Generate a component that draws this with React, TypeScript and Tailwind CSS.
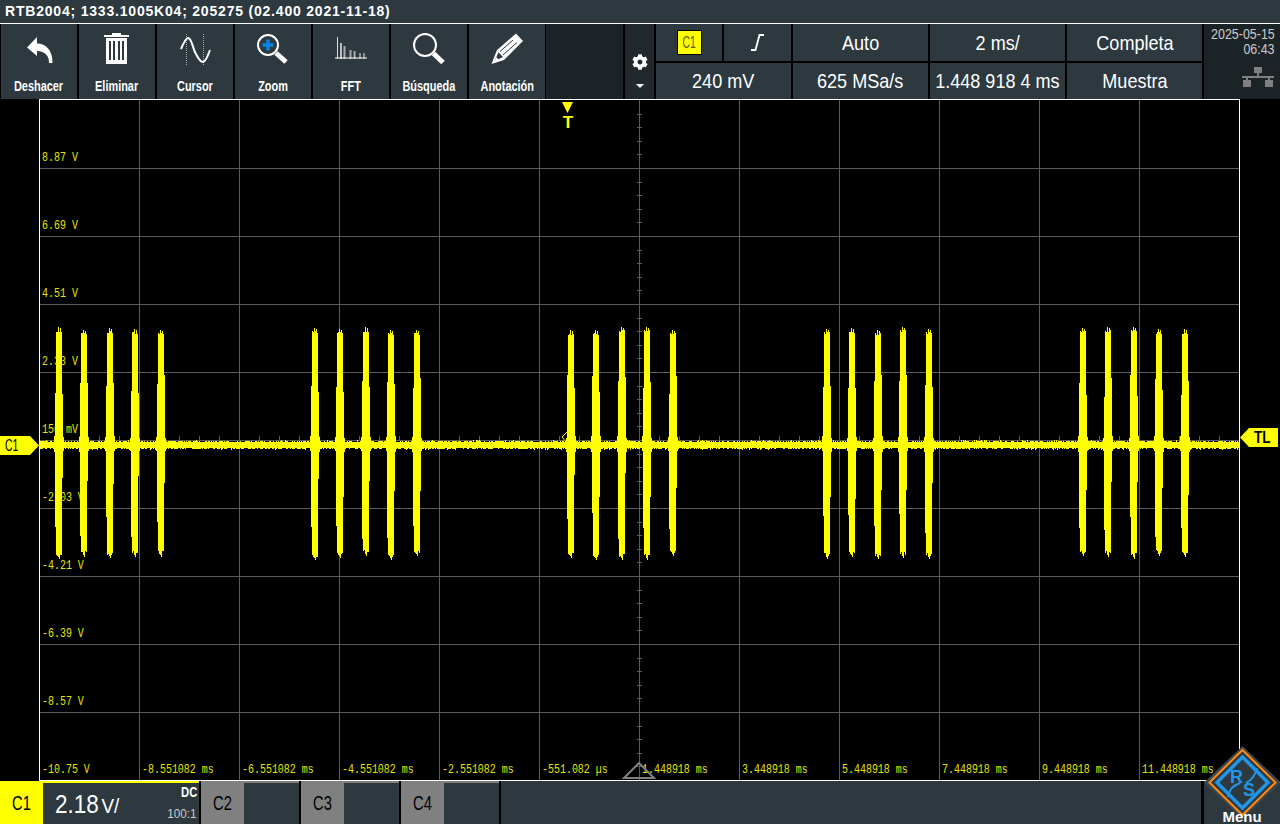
//@ts-nocheck
import { FaCog } from "react-icons/fa";

const sans = "font-['Liberation_Sans',sans-serif]";

// deterministic noise so the trace stays the same on every render
let seed = 1337;
const rnd = () => {
  seed = (seed * 16807) % 2147483647;
  return seed / 2147483647;
};

const burstGroups = [58.5, 314.5, 570.5, 826.5, 1082.5];
const burstOffsets = [0, 25.5, 51, 76.7, 102.2];

function buildTrace() {
  const cols = {};
  const put = (x, a, b) => {
    const c = cols[x];
    if (!c) cols[x] = [a, b];
    else cols[x] = [Math.min(c[0], a), Math.max(c[1], b)];
  };
  for (let x = 40; x < 1239; x++) {
    let a = 441 + Math.floor(rnd() * 2);
    let b = 448 + Math.floor(rnd() * 2);
    if (rnd() > 0.93) a -= 1;
    if (rnd() > 0.9) b += 1;
    put(x, a, b);
  }
  burstGroups.forEach((g) => {
    burstOffsets.forEach((o) => {
      const c = Math.round(g + o);
      const top = 327 + Math.floor(rnd() * 4);
      const bot = 556 + Math.floor(rnd() * 5);
      // core
      for (let x = c - 3; x <= c + 2; x++) {
        put(x, top + 3 + Math.floor(rnd() * 3), bot - 3 - Math.floor(rnd() * 4));
      }
      // tips
      put(c - 1, top, top + 10);
      put(c + 1, top + 1, top + 10);
      put(c, bot - 8, bot);
      put(c - 1, bot - 8, bot - 2);
      // outer steps
      put(c - 4, 375 + Math.floor(rnd() * 25), 540 - Math.floor(rnd() * 30));
      put(c + 3, 375 + Math.floor(rnd() * 25), 500 - Math.floor(rnd() * 30));
      // wider blob at the baseline
      for (let x = c - 5; x <= c + 4; x++) put(x, 436 + Math.floor(rnd() * 3), 451 + Math.floor(rnd() * 2));
    });
  });
  return Object.keys(cols)
    .map((x) => `M${Number(x) + 0.5} ${cols[x][0]}V${cols[x][1]}`)
    .join("");
}
const tracePath = buildTrace();

const gridX = Array.from({ length: 11 }, (_, i) => 139 + i * 100);
const gridY = Array.from({ length: 9 }, (_, i) => 168 + i * 68);
const ticksX = Array.from({ length: 59 }, (_, i) => 59 + i * 20);
const ticksY = Array.from({ length: 49 }, (_, i) => 113.6 + i * 13.6);

const yLabels = ["8.87 V", "6.69 V", "4.51 V", "2.33 V", "150 mV", "-2.03 V", "-4.21 V", "-6.39 V", "-8.57 V", "-10.75 V"];
const xLabels = [
  "-8.551082 ms",
  "-6.551082 ms",
  "-4.551082 ms",
  "-2.551082 ms",
  "-551.082 µs",
  "1.448918 ms",
  "3.448918 ms",
  "5.448918 ms",
  "7.448918 ms",
  "9.448918 ms",
  "11.448918 ms",
];

function UndoIcon() {
  return (
    <svg viewBox="23 33 32 32" className="h-8 w-8">
      <path d="M27 47.5L37 37V43.5C46 43.5 52.5 50 52.5 63H49C49 55.5 45 51.5 37 51V56Z" fill="#fff" />
    </svg>
  );
}

function TrashIcon() {
  return (
    <svg viewBox="102 33 32 32" className="h-8 w-8">
      <rect x="113" y="33" width="9" height="2" fill="#fff" />
      <rect x="105" y="35" width="25" height="2" fill="#fff" />
      <rect x="107" y="38" width="21" height="26" fill="#fff" />
      <rect x="110" y="41" width="2" height="19" fill="#2d383f" />
      <rect x="114" y="41" width="2" height="19" fill="#2d383f" />
      <rect x="119" y="41" width="2" height="19" fill="#2d383f" />
      <rect x="123" y="41" width="2" height="19" fill="#2d383f" />
    </svg>
  );
}

function CursorIcon() {
  return (
    <svg viewBox="179 33 32 32" className="h-8 w-8" fill="none">
      <path d="M186.5 34V65M203.5 34V65" stroke="#aaa" strokeWidth="1" strokeDasharray="1 1" />
      <path d="M181 49C184 42 186 38 188 38C192 38 193 50 196 54C198 58 201 62 203 62C206 62 208 55 210 50" stroke="#fff" strokeWidth="2" />
    </svg>
  );
}

function ZoomIcon() {
  return (
    <svg viewBox="257 33 32 32" className="h-8 w-8" fill="none">
      <circle cx="268" cy="45" r="10" stroke="#fff" strokeWidth="2" />
      <path d="M276 53L286 62" stroke="#fff" strokeWidth="5" />
      <path d="M268 39.5V50.5M262.5 45H273.5" stroke="#0a84e8" strokeWidth="3.5" />
    </svg>
  );
}

function FftIcon() {
  return (
    <svg viewBox="335 33 32 32" className="h-8 w-8" fill="none">
      <path d="M337.5 37V59" stroke="#ddd" strokeWidth="1" />
      <path d="M341 43V59" stroke="#bbb" strokeWidth="2" />
      <path d="M344.5 46V59" stroke="#aaa" strokeWidth="2" />
      <path d="M350.5 50V59M354.5 51V59" stroke="#aaa" strokeWidth="2" />
      <path d="M360 53V59M364 53V59" stroke="#aaa" strokeWidth="1.5" />
      <path d="M335 58H367" stroke="#fff" strokeWidth="1" />
    </svg>
  );
}

function SearchIcon() {
  return (
    <svg viewBox="413 33 32 32" className="h-8 w-8" fill="none">
      <circle cx="425" cy="45" r="11" stroke="#fff" strokeWidth="2" />
      <path d="M433.5 53.5L443 62.5" stroke="#fff" strokeWidth="5" />
    </svg>
  );
}

function PencilIcon() {
  return (
    <svg viewBox="491 33 32 32" className="h-8 w-8">
      <path d="M491.5 64L497 50L516 33.5L523 41L504 60Z" fill="#fff" />
      <path d="M494.5 61L498.5 52.5L503 57Z" fill="#2d383f" />
      <path d="M494.5 61L496.5 57L498.5 60Z" fill="#fff" />
      <path d="M500 51.5L513 40M503 55L517 42.5" stroke="#2d383f" strokeWidth="1" fill="none" />
    </svg>
  );
}

const toolbar = [
  { label: "Deshacer", icon: <UndoIcon /> },
  { label: "Eliminar", icon: <TrashIcon /> },
  { label: "Cursor", icon: <CursorIcon /> },
  { label: "Zoom", icon: <ZoomIcon /> },
  { label: "FFT", icon: <FftIcon /> },
  { label: "Búsqueda", icon: <SearchIcon /> },
  { label: "Anotación", icon: <PencilIcon /> },
];

// the instrument's font is tall and narrow, so the values are squeezed sideways
function Value({ children }) {
  return (
    <div className="flex items-center justify-center overflow-hidden bg-[#2d383f] whitespace-nowrap">
      <span className="inline-block scale-x-[0.86]">{children}</span>
    </div>
  );
}

function ChannelTab({ name }) {
  return (
    <div className="flex w-[98px] flex-none">
      <div className={`flex w-[43px] items-center justify-center bg-[#808080] text-[21px] text-black ${sans}`}>
        <span className="inline-block scale-x-[0.7]">{name}</span>
      </div>
      <div className="flex-1 border-t-2 border-[#808080] bg-[#2d383f]" />
    </div>
  );
}

export default function App() {
  return (
    <div className="flex h-[824px] w-[1280px] flex-col overflow-hidden bg-black">
      {/* title bar */}
      <div className="flex h-[24px] flex-none items-center border-b border-white bg-[#2d383f] pl-[5px] pb-px font-['Liberation_Sans',sans-serif] text-[14px] font-bold tracking-[0.8px] text-white">
        RTB2004; 1333.1005K04; 205275 (02.400 2021-11-18)
      </div>

      {/* toolbar */}
      <div className="flex h-[75px] flex-none bg-black">
        <div className="flex gap-[2px] pl-px">
          {toolbar.map((b) => (
            <div key={b.label} className="flex w-[76px] flex-none flex-col items-center bg-[#2d383f] pt-[9px]">
              {b.icon}
              <div className={`mt-[13px] text-[14px] leading-[16px] font-bold whitespace-nowrap text-white ${sans}`}>
                <span className="inline-block scale-x-[0.78]">{b.label}</span>
              </div>
            </div>
          ))}
        </div>
        <div className="ml-px w-[77px] flex-none bg-[#1c2327]" />
        <div className="ml-[2px] flex w-[29px] flex-none flex-col items-center bg-[#22292e] pt-[30px]">
          <FaCog className="text-white" size={16} />
          <div className="mt-[14px] h-0 w-0 border-x-[4px] border-t-[4px] border-x-transparent border-t-white" />
        </div>
        <div className={`ml-[2px] grid w-[546px] flex-none grid-cols-[66px_67px_135px_135px_135px] grid-rows-[37px_36px] gap-x-[2px] gap-y-[2px] text-[21px] text-white ${sans}`}>
          <div className="flex items-center justify-center bg-[#2d383f]">
            <div className="flex h-[25px] w-[25px] items-center justify-center border border-black bg-[#ffff00] text-[16px] text-[#5a5a00]">
              <span className="inline-block scale-x-[0.65]">C1</span>
            </div>
          </div>
          <div className="flex items-center justify-center bg-[#2d383f]">
            <svg viewBox="0 0 15 17" className="h-[17px] w-[15px]" fill="none">
              <path d="M1 16H5.5L9.5 1H14" stroke="#fff" strokeWidth="1.8" />
            </svg>
          </div>
          <Value>Auto</Value>
          <Value>2 ms/</Value>
          <Value>Completa</Value>
          <div className="col-span-2 flex items-center justify-center bg-[#2d383f]">
            <span className="inline-block scale-x-[0.86]">240 mV</span>
          </div>
          <Value>625 MSa/s</Value>
          <Value>1.448 918 4 ms</Value>
          <Value>Muestra</Value>
        </div>
        <div className={`ml-[2px] flex w-[76px] flex-none flex-col items-end overflow-hidden bg-[#1c2327] pt-[2px] pr-[5px] text-[15px] leading-[15px] whitespace-nowrap text-[#cccccc] ${sans}`}>
          <div className="origin-right scale-x-[0.83]">2025-05-15</div>
          <div className="origin-right scale-x-[0.83]">06:43</div>
          <svg viewBox="0 0 32 20" className="mt-[11px] mr-px h-[20px] w-[32px] flex-none" fill="#808080">
            <rect x="12" y="0" width="8" height="6" />
            <rect x="0" y="9" width="32" height="2" />
            <rect x="15" y="5" width="2" height="5" />
            <rect x="4" y="10" width="2" height="4" />
            <rect x="26" y="10" width="2" height="4" />
            <rect x="1" y="13" width="8" height="7" />
            <rect x="23" y="13" width="8" height="7" />
          </svg>
        </div>
      </div>

      {/* plot */}
      <div className="relative flex h-[682px] flex-none">
        <div className="w-[39px] flex-none" />
        <div className="relative w-[1201px] flex-none border border-white">
          <div className="absolute inset-0 flex flex-col pl-[2px] font-['Liberation_Mono',monospace] text-[12px] leading-[12px] text-[#e4e400]">
            {yLabels.map((l) => (
              <div key={l} className="flex h-[68px] flex-none items-end pb-[4px] whitespace-pre">
                <span className="inline-block origin-left scale-x-[0.83]">{l}</span>
              </div>
            ))}
          </div>
          <div className="absolute right-0 bottom-[4px] left-0 flex pl-[99px] font-['Liberation_Mono',monospace] text-[12px] leading-[12px] text-[#e4e400]">
            {xLabels.map((l) => (
              <div key={l} className="w-[100px] flex-none pl-[3px] whitespace-pre">
                <span className="inline-block origin-left scale-x-[0.83]">{l}</span>
              </div>
            ))}
          </div>
          <svg viewBox="40 100 1199 680" className="absolute inset-0 h-[680px] w-[1199px]" fill="none" shapeRendering="crispEdges">
            {gridX.map((x) => (
              <path key={x} d={`M${x + 0.5} 100V780`} stroke="#5c5c5c" />
            ))}
            {gridY.map((y) => (
              <path key={y} d={`M40 ${y + 0.5}H1239`} stroke="#5c5c5c" />
            ))}
            {ticksX.map((x) => (
              <path key={x} d={`M${x + 0.5} 436V441`} stroke="#5c5c5c" />
            ))}
            {ticksY.map((y) => (
              <path key={y} d={`M637 ${Math.round(y) + 0.5}H642`} stroke="#5c5c5c" />
            ))}
            <path d={tracePath} stroke="#ffff00" />
            <path d="M570 432H567L562 437L566 442M570 437H576" stroke="#ffff00" shapeRendering="auto" />
            <path d="M562 102H573L567.5 113Z" fill="#ffff00" stroke="none" shapeRendering="auto" />
            <path d="M624 778L639 763L654 778Z" stroke="#808080" strokeWidth="2" shapeRendering="auto" />
          </svg>
          <div className="absolute top-[13px] left-[522px] w-[12px] text-center font-['Liberation_Sans',sans-serif] text-[17px] leading-[20px] font-bold text-[#ffff00]">T</div>
        </div>
        <div className="w-[40px] flex-none" />
        <div className={`absolute top-[337px] left-0 flex h-[19px] w-[39px] items-center bg-[#ffff00] pl-[5px] text-[17px] text-black [clip-path:polygon(0_0,30px_0,39px_50%,30px_100%,0_100%)] ${sans}`}>
          <span className="inline-block origin-left scale-x-[0.62]">C1</span>
        </div>
        <div className={`absolute top-[329px] left-[1240px] flex h-[19px] w-[38px] items-center justify-end bg-[#ffff00] pr-[7px] text-[16px] font-bold text-black [clip-path:polygon(9px_0,100%_0,100%_100%,9px_100%,0_50%)] ${sans}`}>
          <span className="inline-block origin-right scale-x-[0.85]">TL</span>
        </div>
      </div>

      {/* channel bar */}
      <div className="flex h-[43px] flex-none gap-[2px] bg-black">
        <div className="flex w-[199px] flex-none">
          <div className={`flex w-[43px] items-center justify-center bg-[#ffff00] text-[21px] text-black ${sans}`}>
            <span className="inline-block scale-x-[0.7]">C1</span>
          </div>
          <div className="flex flex-1 justify-between border-t-2 border-[#ffff00] bg-[#2d383f] pl-[12px]">
            <div className={`mt-[6px] flex origin-left scale-x-[0.9] items-baseline gap-[3px] text-[25px] leading-[30px] whitespace-nowrap text-white ${sans}`}>
              <span>2.18</span>
              <span className="text-[21px]">V/</span>
            </div>
            <div className={`flex flex-col items-end pr-[2px] text-white ${sans}`}>
              <div className="text-[14px] leading-[18px] font-bold">
                <span className="inline-block origin-right scale-x-[0.8]">DC</span>
              </div>
              <div className="mt-[6px] text-[13px] leading-[14px] text-[#cccccc]">
                <span className="inline-block origin-right scale-x-[0.9]">100:1</span>
              </div>
            </div>
          </div>
        </div>
        <ChannelTab name="C2" />
        <ChannelTab name="C3" />
        <ChannelTab name="C4" />
        <div className="flex-1 bg-[#2d383f]" />
        <div className="relative ml-px w-[76px] flex-none bg-[#2d383f]">
          <svg viewBox="1204 748 76 76" className="absolute bottom-0 left-0 h-[76px] w-[76px] overflow-visible" fill="none">
            <path d="M1242.5 746L1281 782.5L1242.5 819L1204 782.5Z" fill="#3c464d" />
            <path d="M1242.5 750L1275.5 782.5L1242.5 815L1209.5 782.5Z" stroke="#ff8a14" strokeWidth="2" fill="#2d383f" />
            <path d="M1242.5 757L1268 782.5L1242.5 808L1217 782.5Z" stroke="#2196e8" strokeWidth="3.5" />
            <path d="M1228 797C1230 788 1233 786 1240 783M1257 768C1255 776 1252 780 1246 783" stroke="#2196e8" strokeWidth="2" />
            <text x="1230" y="783" fontSize="18" fontWeight="700" fontFamily="Liberation Sans, sans-serif" fill="#2196e8">R</text>
            <text x="1243" y="796" fontSize="18" fontWeight="700" fontFamily="Liberation Sans, sans-serif" fill="#2196e8">S</text>
          </svg>
          <div className="absolute right-0 bottom-[-2px] left-0 text-center font-['Liberation_Sans',sans-serif] text-[15px] leading-[18px] font-bold text-white">Menu</div>
        </div>
      </div>
    </div>
  );
}
